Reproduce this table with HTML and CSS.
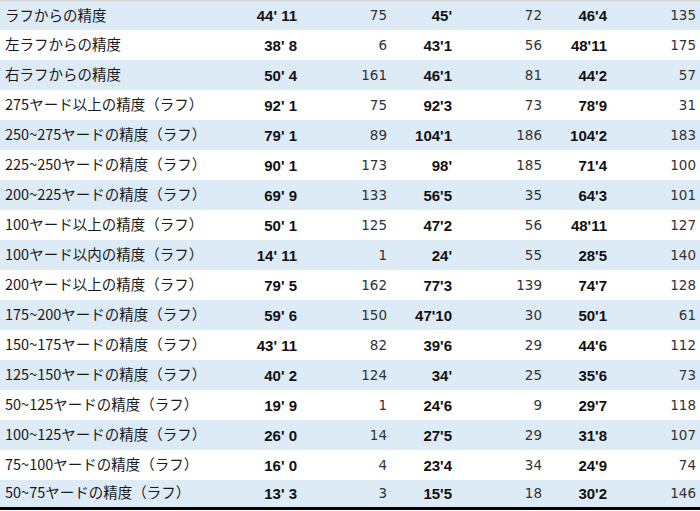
FILE: index.html
```html
<!DOCTYPE html>
<html lang="ja">
<head>
<meta charset="utf-8">
<link rel="stylesheet" href="styles.css">
</head>
<body>
<div class="wrap">
<table class="stats">
<colgroup>
<col class="c1"><col class="c2"><col class="c3"><col class="c4"><col class="c5"><col class="c6"><col class="c7">
</colgroup>
<tbody>
<tr><td class="lbl">ラフからの精度</td><td class="b">44' 11</td><td class="n">75</td><td class="b">45'</td><td class="n">72</td><td class="b">46'4</td><td class="n">135</td></tr>
<tr><td class="lbl">左ラフからの精度</td><td class="b">38' 8</td><td class="n">6</td><td class="b">43'1</td><td class="n">56</td><td class="b">48'11</td><td class="n">175</td></tr>
<tr><td class="lbl">右ラフからの精度</td><td class="b">50' 4</td><td class="n">161</td><td class="b">46'1</td><td class="n">81</td><td class="b">44'2</td><td class="n">57</td></tr>
<tr><td class="lbl">275ヤード以上の精度（ラフ）</td><td class="b">92' 1</td><td class="n">75</td><td class="b">92'3</td><td class="n">73</td><td class="b">78'9</td><td class="n">31</td></tr>
<tr><td class="lbl">250~275ヤードの精度（ラフ）</td><td class="b">79' 1</td><td class="n">89</td><td class="b">104'1</td><td class="n">186</td><td class="b">104'2</td><td class="n">183</td></tr>
<tr><td class="lbl">225~250ヤードの精度（ラフ）</td><td class="b">90' 1</td><td class="n">173</td><td class="b">98'</td><td class="n">185</td><td class="b">71'4</td><td class="n">100</td></tr>
<tr><td class="lbl">200~225ヤードの精度（ラフ）</td><td class="b">69' 9</td><td class="n">133</td><td class="b">56'5</td><td class="n">35</td><td class="b">64'3</td><td class="n">101</td></tr>
<tr><td class="lbl">100ヤード以上の精度（ラフ）</td><td class="b">50' 1</td><td class="n">125</td><td class="b">47'2</td><td class="n">56</td><td class="b">48'11</td><td class="n">127</td></tr>
<tr><td class="lbl">100ヤード以内の精度（ラフ）</td><td class="b">14' 11</td><td class="n">1</td><td class="b">24'</td><td class="n">55</td><td class="b">28'5</td><td class="n">140</td></tr>
<tr><td class="lbl">200ヤード以上の精度（ラフ）</td><td class="b">79' 5</td><td class="n">162</td><td class="b">77'3</td><td class="n">139</td><td class="b">74'7</td><td class="n">128</td></tr>
<tr><td class="lbl">175~200ヤードの精度（ラフ）</td><td class="b">59' 6</td><td class="n">150</td><td class="b">47'10</td><td class="n">30</td><td class="b">50'1</td><td class="n">61</td></tr>
<tr><td class="lbl">150~175ヤードの精度（ラフ）</td><td class="b">43' 11</td><td class="n">82</td><td class="b">39'6</td><td class="n">29</td><td class="b">44'6</td><td class="n">112</td></tr>
<tr><td class="lbl">125~150ヤードの精度（ラフ）</td><td class="b">40' 2</td><td class="n">124</td><td class="b">34'</td><td class="n">25</td><td class="b">35'6</td><td class="n">73</td></tr>
<tr><td class="lbl">50~125ヤードの精度（ラフ）</td><td class="b">19' 9</td><td class="n">1</td><td class="b">24'6</td><td class="n">9</td><td class="b">29'7</td><td class="n">118</td></tr>
<tr><td class="lbl">100~125ヤードの精度（ラフ）</td><td class="b">26' 0</td><td class="n">14</td><td class="b">27'5</td><td class="n">29</td><td class="b">31'8</td><td class="n">107</td></tr>
<tr><td class="lbl">75~100ヤードの精度（ラフ）</td><td class="b">16' 0</td><td class="n">4</td><td class="b">23'4</td><td class="n">34</td><td class="b">24'9</td><td class="n">74</td></tr>
<tr class="last"><td class="lbl">50~75ヤードの精度（ラフ）</td><td class="b">13' 3</td><td class="n">3</td><td class="b">15'5</td><td class="n">18</td><td class="b">30'2</td><td class="n">146</td></tr>
</tbody>
</table>
</div>
</body>
</html>
```
FILE: styles.css
```css
html, body {
  margin: 0;
  padding: 0;
  background: #ffffff;
}
.wrap {
  width: 700px;
  height: 511px;
  overflow: hidden;
  border-top: 1px solid #d4d4d4;
  box-sizing: border-box;
}
.stats {
  width: 700px;
  table-layout: fixed;
  border-collapse: collapse;
  border-spacing: 0;
}
.c1 { width: 240px; }
.c2 { width: 60px; }
.c3 { width: 90px; }
.c4 { width: 65px; }
.c5 { width: 90px; }
.c6 { width: 65px; }
.c7 { width: 90px; }
.stats td {
  height: 30px;
  padding: 0 3px 0 0;
  vertical-align: middle;
  white-space: nowrap;
  box-sizing: border-box;
}
.stats tr:nth-child(odd) td {
  background: #ddebf7;
}
.stats tr:first-child td {
  height: 29px;
}
.stats tr.last td {
  height: 28px;
  border-bottom: 3px solid #000;
}
.lbl {
  text-align: left;
  padding-left: 5px !important;
  padding-bottom: 3px !important;
  font-family: "Noto Sans CJK JP", sans-serif;
  font-size: 14.5px;
  color: #1a1a1a;
}
.b {
  text-align: right;
  font-family: "Liberation Sans", Arial, sans-serif;
  font-weight: bold;
  font-size: 15px;
  color: #111;
}
.n {
  text-align: right;
  padding-bottom: 1px !important;
  font-family: "DejaVu Sans", sans-serif;
  font-size: 13.5px;
  color: #333;
}
.stats td:last-child {
  padding-right: 4px;
}
```
